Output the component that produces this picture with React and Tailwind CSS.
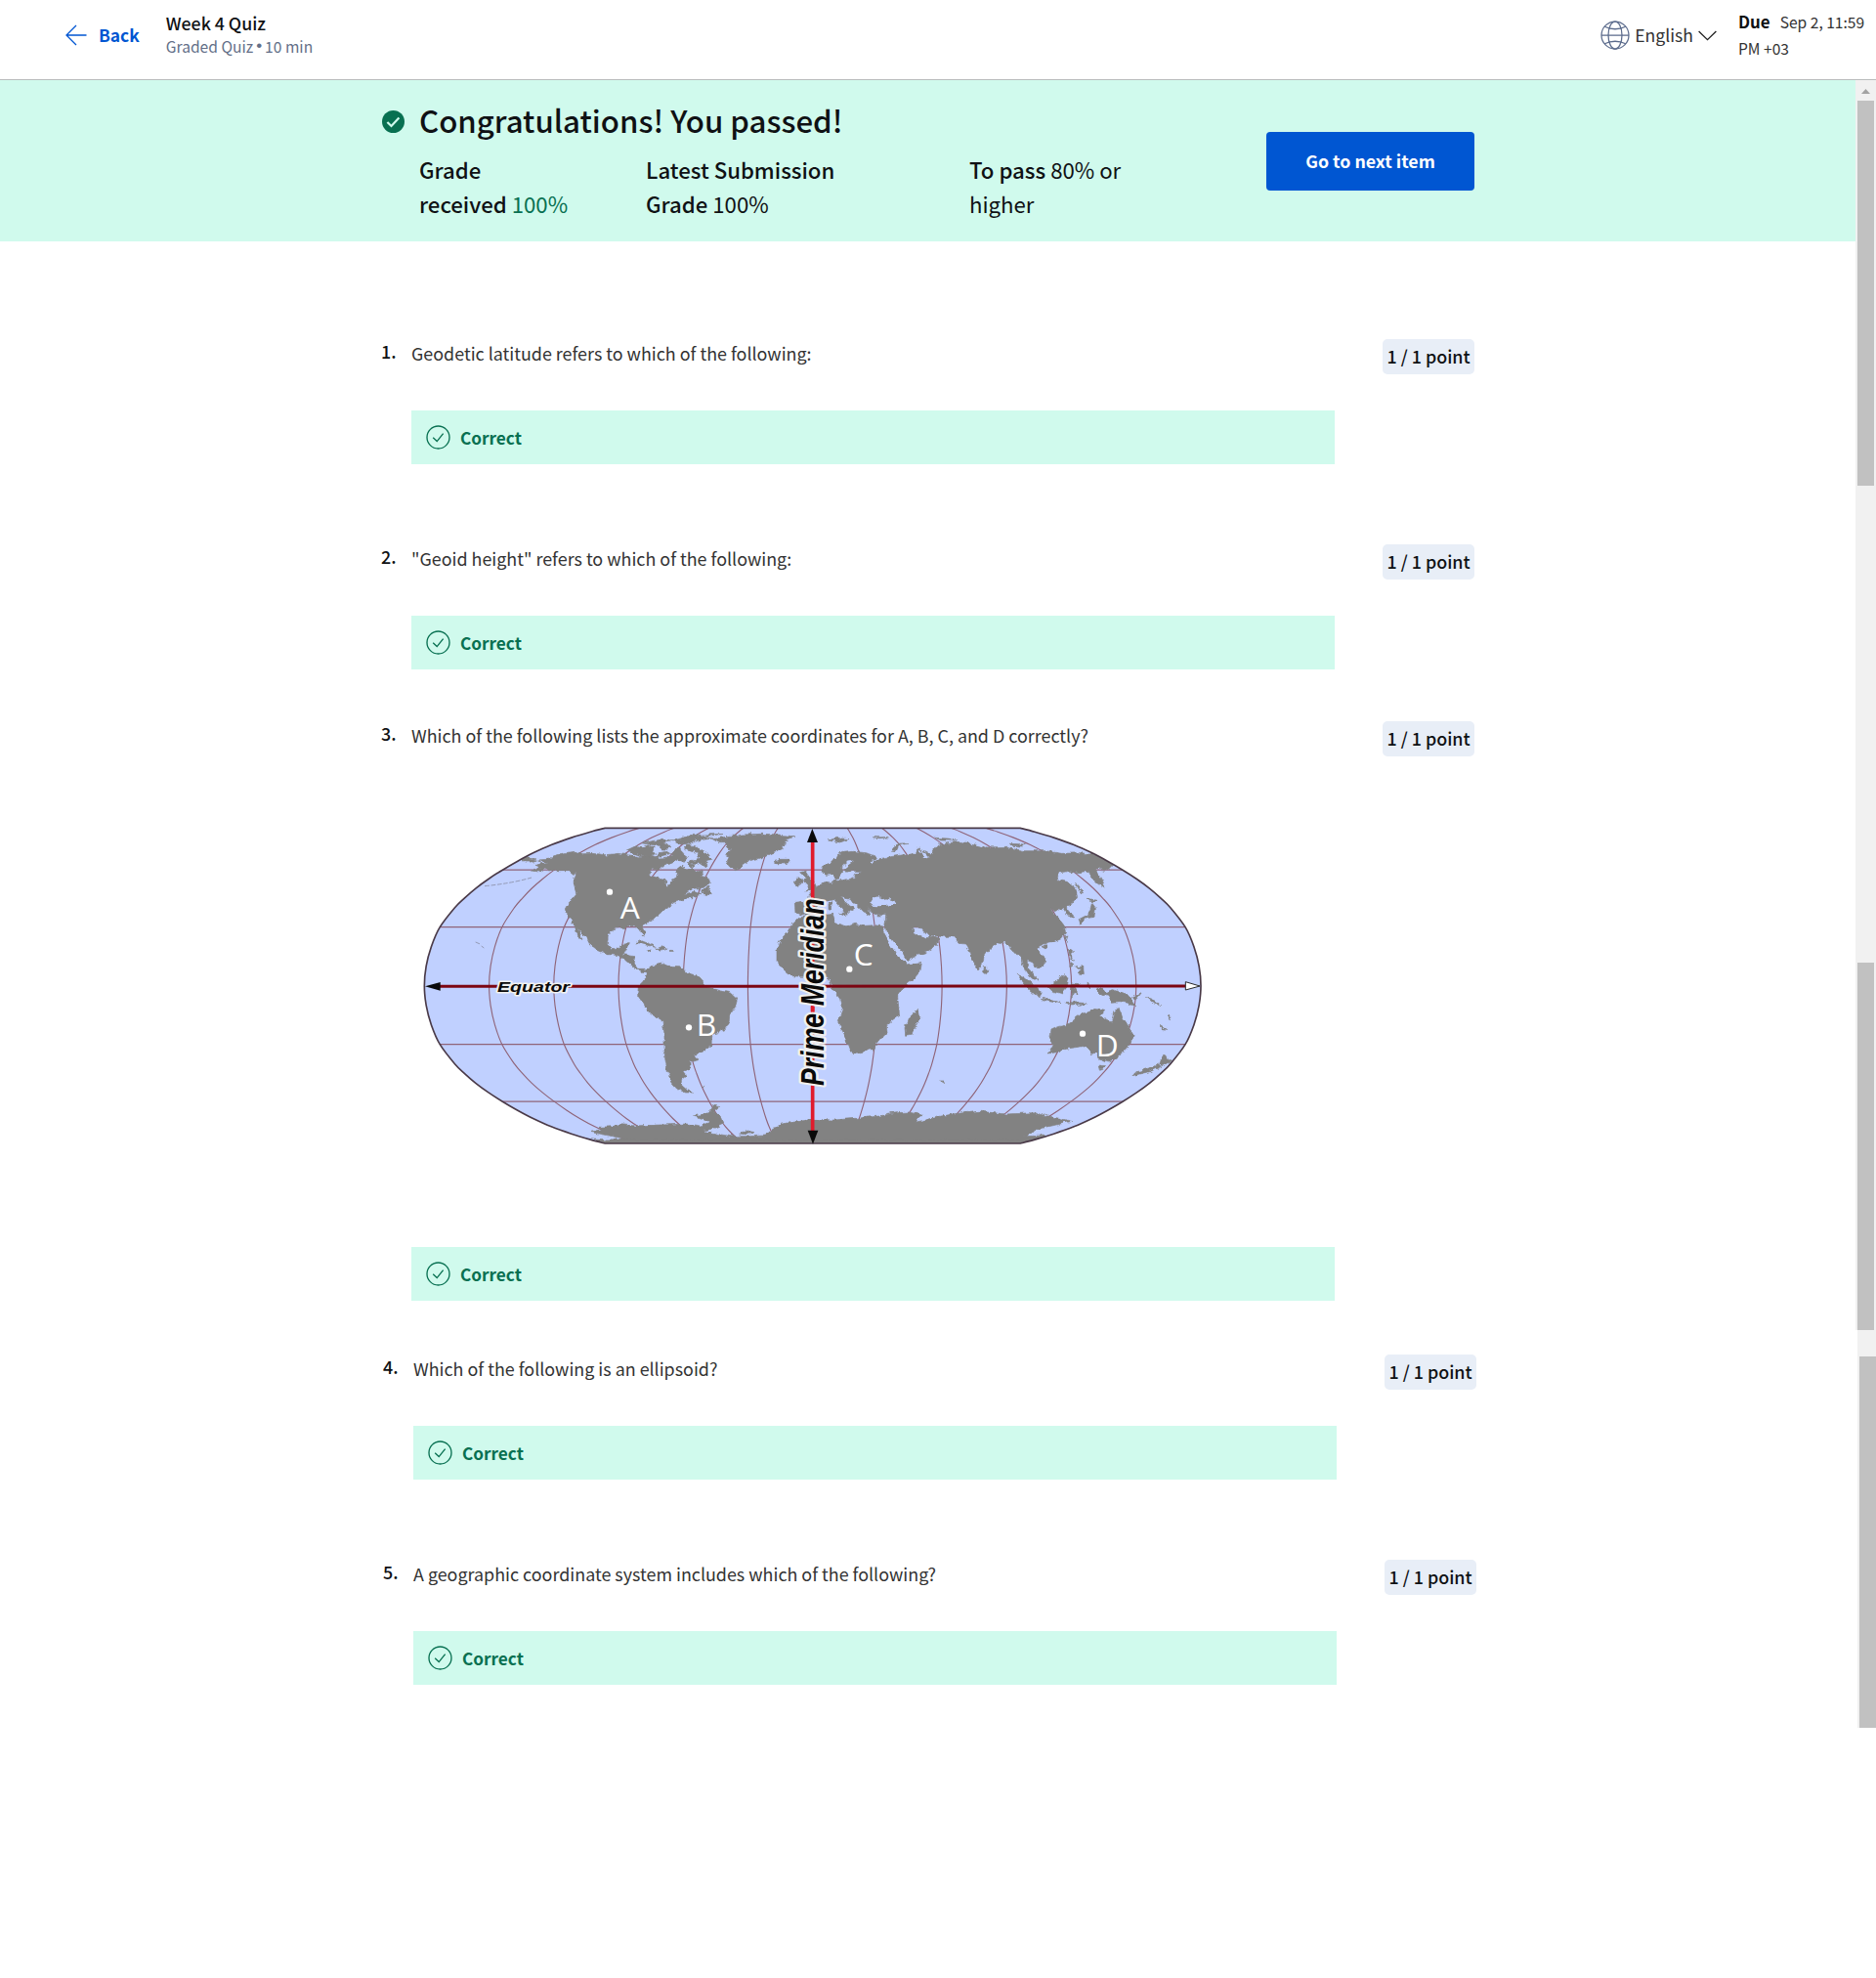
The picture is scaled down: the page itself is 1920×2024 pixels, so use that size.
import React from "react";

/* ---------- icons ---------- */

function ArrowLeft() {
  return (
    <svg className="h-[22px] w-[22px]" viewBox="0 0 22 22" fill="none" stroke="#0056d2" strokeWidth="1.3">
      <path d="M11 1 L1 11 L11 21 M1 11 H21.5" />
    </svg>
  );
}

function Globe() {
  return (
    <svg className="h-[30px] w-[30px]" viewBox="0 0 30 30" fill="none" stroke="#5b6b8c" strokeWidth="1.25">
      <circle cx="15" cy="15" r="14" />
      <ellipse cx="15" cy="15" rx="7" ry="14" />
      <path d="M1 15 H29 M4.2 6.3 Q15 11.2 25.8 6.3 M4.2 23.7 Q15 18.8 25.8 23.7" />
    </svg>
  );
}

function ChevronDown() {
  return (
    <svg className="h-[11px] w-[19px]" viewBox="0 0 19 11" fill="none" stroke="#1f1f1f" strokeWidth="1.3">
      <path d="M0.6 1 L9.5 9.6 L18.4 1" />
    </svg>
  );
}

function CheckSolid() {
  return (
    <svg className="h-[23px] w-[23px]" viewBox="0 0 23 23">
      <circle cx="11.5" cy="11.5" r="11.5" fill="#087051" />
      <path d="M5.4 12 L9.5 16 L17.4 7.6" fill="none" stroke="#d0faed" strokeWidth="2.2" />
    </svg>
  );
}

function CheckOutline() {
  return (
    <svg className="h-[25px] w-[25px]" viewBox="0 0 25 25" fill="none" stroke="#087051" strokeWidth="1.35">
      <circle cx="12.5" cy="12.5" r="11.5" />
      <path d="M7.2 12.8 L11.2 16.6 L17.6 8.6" />
    </svg>
  );
}

/* ---------- world map (Robinson projection graticule) ---------- */

const ROBINSON = [
  [0, 1, 0], [10, 0.9954, 0.124], [20, 0.9822, 0.248], [30, 0.96, 0.372], [40, 0.9216, 0.4958],
  [45, 0.8962, 0.5571], [50, 0.8679, 0.6176], [55, 0.835, 0.6769], [60, 0.7986, 0.7346],
  [65, 0.7597, 0.7903], [70, 0.7186, 0.8435], [75, 0.6732, 0.8936], [80, 0.6213, 0.9394],
  [85, 0.5722, 0.9761], [90, 0.535, 1],
];
const CX = 1235;
const CY = 536;
const HALF_W = 1192;
const HALF_H = 484;

function meridianPoints(k) {
  const north = [...ROBINSON].reverse().map(([, x, y]) => [CX + k * HALF_W * x, CY - HALF_H * y]);
  const south = ROBINSON.slice(1).map(([, x, y]) => [CX + k * HALF_W * x, CY + HALF_H * y]);
  return [...north, ...south];
}

/* Catmull-Rom spline through the points, as cubic segments */
function spline(pts) {
  const f = (n) => n.toFixed(1);
  let d = "";
  for (let i = 0; i < pts.length - 1; i++) {
    const a = pts[i - 1] || pts[i];
    const b = pts[i];
    const c = pts[i + 1];
    const e = pts[i + 2] || c;
    d += ` C${f(b[0] + (c[0] - a[0]) / 6)},${f(b[1] + (c[1] - a[1]) / 6)} ${f(c[0] - (e[0] - b[0]) / 6)},${f(
      c[1] - (e[1] - b[1]) / 6
    )} ${f(c[0])},${f(c[1])}`;
  }
  return d;
}

const WEST_EDGE = meridianPoints(-1);
const EAST_EDGE = meridianPoints(1).reverse();
const OUTLINE = `M${WEST_EDGE[0].join()}${spline(WEST_EDGE)} L${EAST_EDGE[0].join()}${spline(EAST_EDGE)} Z`;
const MERIDIANS = [-5, -4, -3, -2, -1, 1, 2, 3, 4, 5].map((n) => {
  const pts = meridianPoints(n / 6);
  return `M${pts[0].join()}${spline(pts)}`;
});
const PARALLELS = [
  [0.7346, 0.7986],
  [0.372, 0.96],
].flatMap(([y, x]) => [
  [CX - HALF_W * x, CX + HALF_W * x, CY - HALF_H * y],
  [CX - HALF_W * x, CX + HALF_W * x, CY + HALF_H * y],
]);

/* Land west of x = 1230 */
const WEST_LAND = [
  // North America
  "370,183 398,172 384,166 405,160 425,160 392,150 430,147 440,137 470,128 510,124 530,131 560,130 600,134 640,130 665,134 700,140 740,134 765,144 800,140 812,118 826,112 836,132 850,142 838,160 815,150 800,158 775,166 760,180 742,178 732,196 760,205 785,208 784,226 792,234 800,215 816,206 820,190 815,180 830,168 850,180 866,174 880,186 898,180 895,200 912,205 920,220 900,235 865,238 840,256 872,246 890,254 868,266 850,266 830,274 810,280 790,295 765,315 750,328 730,340 712,350 722,372 716,384 706,368 694,355 668,352 664,359 640,357 620,366 608,382 604,405 620,425 640,422 648,408 670,407 662,425 655,440 688,446 688,468 700,484 720,484 722,494 705,492 685,478 668,462 650,454 634,442 604,440 570,426 550,410 540,390 520,365 498,335 484,325 478,300 495,270 512,250 504,228 500,210 506,195 490,182 440,182 412,178 395,186",
  "498,335 512,350 520,372 528,398 518,388 506,368",
  "890,248 918,228 916,240 928,254 905,253",
  "664,120 690,108 712,112 730,104 748,110 742,126 755,130 735,138 700,136 680,128",
  "708,98 740,92 770,88 800,92 775,98 790,104 760,106",
  "800,90 830,84 850,74 900,72 960,70 900,78 930,84 880,90 860,100 830,102",
  "770,104 800,106 790,118 770,116",
  "850,104 880,108 890,118 915,132 926,148 905,152 912,166 895,170 880,160 856,160 866,150 890,144 880,130 858,122 842,112",
  "756,140 785,134 800,130 790,124 762,128",
  "850,160 872,164 862,172",
  // Greenland
  "928,86 960,80 1000,78 1020,72 1080,70 1130,72 1182,78 1150,88 1160,96 1140,104 1145,116 1125,124 1110,128 1085,140 1060,148 1040,152 1022,164 1010,178 998,182 978,172 970,156 976,142 970,130 984,120 972,108 974,98 950,98",
  "1116,152 1130,148 1160,148 1168,156 1148,162 1126,161",
  // Bering islands
  "340,146 360,142 375,148 388,150 370,156 350,156",
  // Caribbean
  "690,404 710,398 735,408 752,418 728,412 705,406",
  "752,422 775,416 788,424 768,430",
  "724,425 738,427 730,431",
  "795,424 810,425 802,429",
  // South America
  "722,490 740,475 768,465 790,475 830,476 838,486 858,500 885,504 896,518 903,538 945,550 985,558 1004,576 998,600 980,625 978,650 965,670 935,682 926,695 924,715 908,735 888,744 870,748 884,764 858,770 858,788 840,796 847,812 832,824 832,838 848,852 870,864 845,864 818,852 800,832 790,800 784,770 780,740 780,680 774,644 735,620 715,590 698,566 700,540 718,522 724,505",
  "896,846 905,844 900,850",
  // British Isles and Iberia
  "1178,222 1186,208 1202,206 1204,222 1190,232",
  "1196,188 1215,184 1226,200 1240,224 1246,238 1215,246 1222,230 1205,212 1214,204",
  "1180,280 1210,276 1240,280 1262,282 1245,300 1235,314 1205,320 1182,310",
  // Antarctica, western half
  "597,1020 555,1008 600,1010 655,1006 600,994 552,985 590,976 580,970 620,968 645,962 690,966 740,964 800,962 850,960 890,966 920,954 900,944 868,936 900,930 928,914 930,902 950,908 932,922 955,940 962,960 930,974 900,982 935,990 985,998 1040,998 1090,996 1110,978 1140,960 1180,954 1235,946 1235,1020",
  "1010,990 1030,980 1056,986 1035,992",
];

/* Land east of x = 1230, in the eastern half's own coordinates */
const EAST_LAND = [
  // Africa
  "-35,326 0,322 50,318 68,316 76,342 108,356 135,346 165,352 195,350 222,354 222,372 240,405 262,440 288,462 295,474 340,466 336,490 315,516 285,540 266,566 268,590 272,628 245,648 232,660 234,680 212,702 190,730 165,738 125,743 118,730 105,690 82,646 96,610 88,575 66,545 58,520 40,508 0,500 -25,508 -60,506 -85,485 -105,460 -105,425 -95,395 -70,370 -60,350",
  // Eurasia
  "-10,262 12,236 38,218 62,218 75,210 100,212 132,204 140,192 152,184 125,184 110,190 100,178 126,158 130,150 112,154 95,170 98,190 88,204 76,206 66,194 50,196 30,184 34,170 62,156 80,134 100,127 130,124 170,128 205,142 198,150 178,152 186,160 212,146 245,140 270,136 292,132 322,132 326,114 345,122 366,134 388,106 418,98 460,94 505,102 540,114 600,112 655,122 720,122 770,130 830,128 880,136 930,164 912,182 888,178 872,182 890,206 900,236 884,226 862,205 852,184 820,188 790,184 765,188 755,210 790,218 812,234 818,262 796,290 782,294 790,306 812,326 795,328 780,306 764,300 752,310 736,298 744,316 764,334 778,352 782,376 768,392 740,404 715,408 700,415 696,430 716,446 722,462 710,476 696,484 680,464 664,458 664,480 680,496 695,520 685,516 668,500 655,480 648,455 640,438 625,436 610,415 598,402 575,402 550,424 532,438 528,466 514,488 500,464 488,432 474,408 456,406 435,385 395,385 360,380 340,360 312,358 320,374 340,384 352,392 362,382 394,394 384,414 355,432 292,458 280,438 258,405 232,372 228,350 230,320 198,316 178,304 172,292 182,318 165,312 142,288 115,270 88,264 112,284 134,298 110,316 96,300 72,272 48,276 20,276",
  "248,120 262,100 300,98 270,106 262,122",
  "50,90 80,82 115,86 90,96",
  "380,82 420,84 450,90 400,90",
  "610,100 660,102 650,108 620,106",
  "190,80 240,80 210,83",
  // Mediterranean islands
  "54,284 64,280 62,304 54,302",
  "86,314 108,312 104,322",
  "204,322 218,320 210,328",
  // Madagascar
  "330,610 335,632 310,685 290,688 288,665 298,640",
  "532,478 545,490 538,500 530,494",
  // Japan
  "846,268 876,274 858,282",
  "862,284 874,300 870,322 845,326 828,346 822,332 850,318 858,300",
  "812,220 836,252 828,250",
  // Taiwan, Hainan and the Philippines
  "780,386 790,384 786,404",
  "708,416 724,410 722,424",
  "790,424 802,430 800,450 812,462 796,454",
  "812,480 836,476 838,500 822,498 826,486",
  "798,464 806,470 794,478",
  // Sumatra, Java, Borneo, Sulawesi
  "634,502 655,510 690,540 708,560 700,572 675,552 650,524",
  "706,574 740,578 765,590 720,582",
  "780,586 820,588 850,590 800,594",
  "730,540 750,524 775,500 792,512 786,540 770,560 740,552",
  "800,528 826,530 808,544 820,562 806,560 800,572 796,545",
  "850,524 856,544 848,540",
  "820,598 845,586 830,596",
  // New Guinea
  "872,544 890,542 905,556 925,548 975,564 998,600 970,588 945,584 925,586 915,568 890,562",
  "985,572 1012,560 1000,576",
  "1030,570 1050,578 1074,598 1050,588",
  "1095,625 1106,638 1098,634",
  "1070,658 1090,670 1078,668",
  // Australia
  "792,654 760,662 738,672 734,700 744,722 728,744 755,740 790,728 835,722 855,728 862,746 874,740 885,762 915,768 935,760 960,740 985,712 990,688 976,662 965,645 955,630 945,600 932,618 926,650 905,638 888,628 902,610 870,604 855,616 835,620 815,634",
  "880,780 905,782 895,792 884,796",
  // New Zealand
  "1084,744 1094,764 1112,764 1082,782 1070,776",
  "1066,778 1076,784 1040,800 990,812 1002,800 1040,788",
  "398,828 412,828 408,834",
  // Antarctica, eastern half
  "4,946 70,948 150,942 210,936 260,926 300,924 345,934 320,955 360,946 400,936 450,928 520,922 600,930 680,926 740,938 800,952 740,966 700,974 655,998 720,996 715,1004 645,1020 4,1020",
];

const WATER = [
  // Black Sea
  "190,266 210,262 212,272 232,268 258,276 254,288 232,290 205,292 186,290 184,276",
  // Red Sea
  "222,368 232,374 262,415 282,436 290,462 270,446 244,410",
  // White Sea and Yellow Sea inlets
  "326,118 350,128 368,146 352,140",
];

function WorldMap() {
  return (
    <svg className="block h-[360px] w-[830px]" viewBox="0 0 2490 1080">
      <defs>
        <clipPath id="globe">
          <path d={OUTLINE} />
        </clipPath>
        {/* roughens the coastlines */}
        <filter id="coast" x="0" y="0" width="2490" height="1080" filterUnits="userSpaceOnUse" colorInterpolationFilters="sRGB">
          <feTurbulence type="fractalNoise" baseFrequency="0.06" numOctaves="3" seed="4" />
          <feDisplacementMap in="SourceGraphic" scale="16" xChannelSelector="R" yChannelSelector="G" />
        </filter>
      </defs>
      <path d={OUTLINE} fill="#c0d0ff" />
      <g clipPath="url(#globe)">
        <g fill="none" stroke="#8f6478" strokeWidth="3.4">
          {MERIDIANS.map((d, i) => (
            <path key={i} d={d} />
          ))}
          {PARALLELS.map(([x1, x2, y], i) => (
            <line key={i} x1={x1} x2={x2} y1={y} y2={y} />
          ))}
        </g>
        <g filter="url(#coast)">
          <g fill="#828282" stroke="#828282" strokeWidth="2" strokeLinejoin="round">
            {WEST_LAND.map((p, i) => (
              <polygon key={i} points={p} />
            ))}
            <g transform="translate(1230 0)">
              {EAST_LAND.map((p, i) => (
                <polygon key={i} points={p} />
              ))}
            </g>
            <rect x="600" y="1008" width="1275" height="20" />
          </g>
          <g fill="#c0d0ff" transform="translate(1230 0)">
            {WATER.map((p, i) => (
              <polygon key={i} points={p} />
            ))}
          </g>
        </g>
        <path
          d="M228 230 Q310 222 372 204 M200 402 L214 408 M218 414 L226 420"
          stroke="#8a8fa6"
          strokeWidth="2.5"
          strokeDasharray="14 5"
          fill="none"
        />
      </g>
      <path d={OUTLINE} fill="none" stroke="#4a3a48" strokeWidth="5" strokeLinejoin="round" />

      <line x1="80" x2="2380" y1="538" y2="537" stroke="#7c0512" strokeWidth="9" />
      <line x1="1235" x2="1235" y1="90" y2="985" stroke="#e01b2c" strokeWidth="11" />
      <g fill="#0a0a0a">
        <polygon points="45,538 92,525 92,551" />
        <polygon points="1234,54 1218,96 1251,96" />
        <polygon points="1236,1022 1220,980 1252,980" />
      </g>
      <polygon points="2380,524 2424,537 2380,549" fill="#fff" stroke="#2a2a2a" strokeWidth="3" />

      <g
        className="font-['Liberation_Sans',sans-serif] font-bold italic"
        fill="#0a0a0a"
        stroke="#f0f0f0"
        strokeLinejoin="round"
        paintOrder="stroke"
      >
        <text x="267" y="555" fontSize="44" strokeWidth="9" textLength="222" lengthAdjust="spacingAndGlyphs">
          Equator
        </text>
        <text
          transform="translate(1269 843) rotate(-90) scale(0.8 1)"
          fontSize="98"
          strokeWidth="15"
          textLength="718"
          lengthAdjust="spacingAndGlyphs"
        >
          Prime Meridian
        </text>
      </g>
      <line x1="1235" x2="1235" y1="600" y2="616" stroke="#e01b2c" strokeWidth="11" />

      <g className="font-['Open_Sans',sans-serif]" fill="#fff" fontSize="95">
        <text x="644" y="331">A</text>
        <text x="878" y="690">B</text>
        <text x="1361" y="475">C</text>
        <text x="2105" y="753">D</text>
        <circle cx="612" cy="248" r="9.5" />
        <circle cx="855" cy="664" r="9.5" />
        <circle cx="1348" cy="485" r="9.5" />
        <circle cx="2064" cy="683" r="9.5" />
      </g>
    </svg>
  );
}

/* ---------- quiz ---------- */

function Question({ number, text, className, children }) {
  return (
    <section className={className}>
      <div className="flex h-9 items-start text-[17.9px] leading-6">
        <div className="w-[31px] font-medium">{number}.</div>
        <h2 className="mt-[2px] flex-1 font-normal text-[#333333]">{text}</h2>
        <div className="flex h-9 w-[94px] items-center justify-center rounded-[5px] bg-[#e8eef7] pb-[2px] font-medium">
          1 / 1 point
        </div>
      </div>
      {children}
      <div className="ml-[31px] mt-[37px] flex h-[55px] w-[945px] items-center bg-[#d0faed] pl-[15px] text-[#087051]">
        <CheckOutline />
        <span className="ml-[10px] text-[17.2px] font-bold leading-6">Correct</span>
      </div>
    </section>
  );
}

export default function App() {
  return (
    <div className="flex h-[2024px] w-[1920px] flex-col overflow-hidden bg-white text-[#0f1114] font-['Noto_Sans_CJK_SC',sans-serif]">
      <header className="flex h-[82px] shrink-0 items-start border-b border-[#b9bcbc]">
        <div className="ml-[67px] mt-[25px] flex items-center text-[#0056d2]">
          <ArrowLeft />
          <span className="ml-[12px] text-[17.4px] font-bold leading-[22px]">Back</span>
        </div>
        <div className="ml-[27px] mt-[11px]">
          <h1 className="text-[17.7px] font-medium leading-6">Week 4 Quiz</h1>
          <p className="flex text-[15.6px] leading-6 text-[#636f88]">
            Graded Quiz<span className="mx-[3px] font-['Liberation_Sans',sans-serif] text-[17px]">•</span>10 min
          </p>
        </div>
        <div className="ml-auto mt-[21px] flex items-center">
          <Globe />
          <span className="ml-[5px] text-[17.6px] leading-[30px] text-[#333333]">English</span>
          <span className="ml-[5px]">
            <ChevronDown />
          </span>
        </div>
        <p className="ml-[22px] mt-[8px] w-[141px] text-[15.6px] leading-[27px] text-[#333333]">
          <b className="mr-[10px] text-[16.9px] font-bold text-[#0f1114]">Due</b>Sep 2, 11:59
          <br />
          PM +03
        </p>
      </header>

      <div className="flex flex-1">
        <main className="w-[1899px] shrink-0">
          <div className="flex h-[165px] bg-[#d0faed] pl-[391px]">
            <span className="mt-[31px]">
              <CheckSolid />
            </span>
            <div className="ml-[15px] mt-[19px] w-[867px]">
              <h2 className="text-[31.2px] font-medium leading-[44px]">Congratulations! You passed!</h2>
              <div className="mt-[11px] flex text-[22.2px] leading-[35px]">
                <p className="w-[232px] font-medium">
                  Grade
                  <br />
                  received <span className="font-normal text-[#087051]">100%</span>
                </p>
                <p className="w-[331px] font-medium">
                  Latest Submission
                  <br />
                  Grade <span className="font-normal">100%</span>
                </p>
                <p>
                  <span className="font-medium">To pass</span> 80% or
                  <br />
                  higher
                </p>
              </div>
            </div>
            <button className="mt-[53px] h-[60px] w-[213px] rounded-[4px] bg-[#0056d2] pb-[2px] text-[17.8px] font-bold text-white">
              Go to next item
            </button>
          </div>

          <div className="ml-[390px] w-[1119px] pt-[100px]">
            <Question number={1} text="Geodetic latitude refers to which of the following:" />
            <Question className="mt-[82px]" number={2} text={'"Geoid height" refers to which of the following:'} />
            <Question
              className="mt-[53px]"
              number={3}
              text="Which of the following lists the approximate coordinates for A, B, C, and D correctly?"
            >
              <div className="mb-[86px] ml-[30px] mt-[56px]">
                <WorldMap />
              </div>
            </Question>
          </div>
          <div className="ml-[392px] w-[1119px]">
            <Question className="mt-[55px]" number={4} text="Which of the following is an ellipsoid?" />
            <Question
              className="mt-[82px]"
              number={5}
              text="A geographic coordinate system includes which of the following?"
            />
          </div>
        </main>

        <aside className="flex w-[21px] shrink-0 flex-col">
          <div className="h-[1279px] bg-[#f1f1f1] pl-[2px]">
            <svg className="mb-[7px] ml-[4px] block h-[14px] w-[9px]" viewBox="0 0 9 14">
              <path d="M0 14 L4.5 9 L9 14 Z" fill="#a3a3a3" />
            </svg>
            <div className="h-[394px] w-[17px] bg-[#c1c1c1]" />
            <div className="mt-[488px] h-[376px] w-[17px] bg-[#c1c1c1]" />
          </div>
          <div className="ml-[2px] h-[407px] bg-[#f1f1f1] pl-[2px] pt-[27px]">
            <div className="h-[380px] bg-[#c1c1c1]" />
          </div>
        </aside>
      </div>
    </div>
  );
}
